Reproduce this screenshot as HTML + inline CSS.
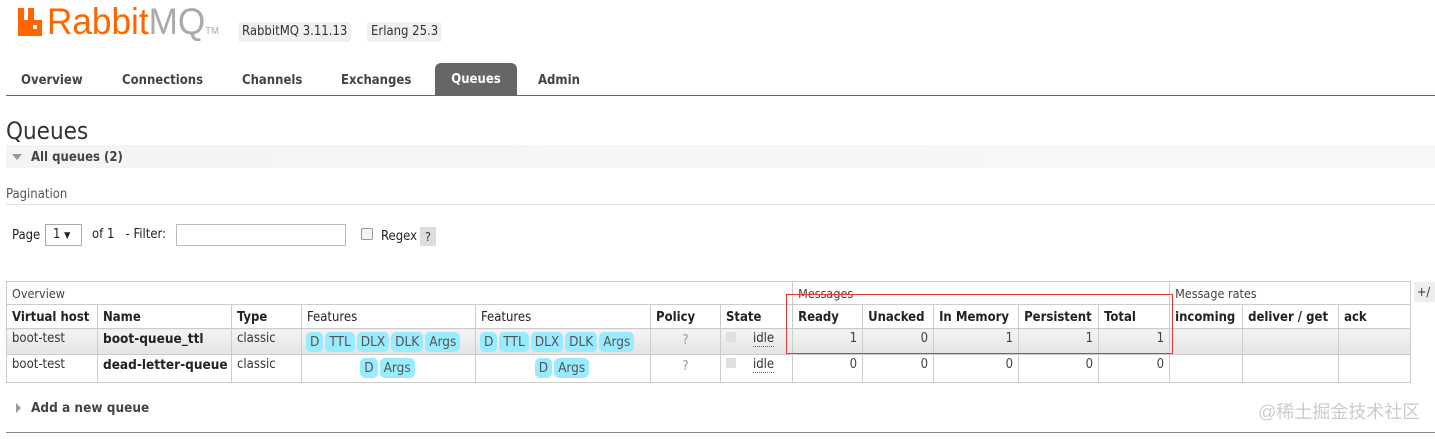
<!DOCTYPE html>
<html><head><meta charset="utf-8"><style>
*{margin:0;padding:0;box-sizing:border-box}
body{width:1435px;height:439px;background:#fff;position:relative;overflow:hidden;font-family:"DejaVu Sans Condensed","DejaVu Sans","Liberation Sans",sans-serif;color:#333;font-size:12.5px}
.a{position:absolute;white-space:nowrap}
.b{font-weight:bold}
.tab{position:absolute;top:63px;height:32px;line-height:33px;font-weight:bold;font-size:13px;color:#444}
table{position:absolute;left:6px;top:281px;border-collapse:collapse;table-layout:fixed;width:1404px}
td,th{border:1px solid #ccc;padding:0 5px;text-align:left;white-space:nowrap;font-size:13px;overflow:hidden}
th{font-weight:bold;font-size:13px;color:#222;height:24px;padding-top:1px}
tr.g td{height:23px;color:#444;font-size:12.5px}
tr.r1 td{height:26px;background:linear-gradient(#f4f4f4,#e4e4e4);vertical-align:top;padding-top:2px}
tr.r2 td{height:28px;vertical-align:top;padding-top:2px}
td.n{text-align:right;color:#444;padding-top:3px}
.f{display:inline-block;background:#99ebff;border-radius:5px;padding:0 4px;margin-right:2px;height:20px;line-height:20px;color:#555;font-size:13.5px}
.c{text-align:center}
</style></head><body>
<div class="a" style="left:18px;top:8px;width:30px;height:28px">
<svg width="30" height="28" viewBox="0 0 30 28"><path d="M0 0h6v12h4V0h6v12h8v16H0z" fill="#f60"/><rect x="15" y="17" width="4" height="4" fill="#fff"/></svg></div>
<div class="a" style="left:47px;top:0px;font-family:'Liberation Sans',sans-serif;font-size:37px;color:#f60;line-height:44px;transform:scaleX(0.95);transform-origin:left">Rabbit<span style="color:#aaa">MQ</span><span style="font-size:10px;color:#aaa">TM</span></div>
<div class="a" style="left:238px;top:22px;height:20px;line-height:20px;padding:0 4px;background:#f0f0f0;border-radius:3px;color:#333;font-size:13px">RabbitMQ 3.11.13</div>
<div class="a" style="left:367px;top:22px;height:20px;line-height:20px;padding:0 4px;background:#f0f0f0;border-radius:3px;color:#333;font-size:13px">Erlang 25.3</div>
<div class="tab" style="left:21px;top:64px">Overview</div>
<div class="tab" style="left:122px;top:64px">Connections</div>
<div class="tab" style="left:242px;top:64px">Channels</div>
<div class="tab" style="left:341px;top:64px">Exchanges</div>
<div class="tab" style="left:435px;width:82px;background:#666;color:#fff;text-align:center;border-radius:6px 6px 0 0;line-height:34px">Queues</div>
<div class="tab" style="left:538px;top:64px">Admin</div>
<div class="a" style="left:6px;top:95px;width:1429px;height:1px;background:#666"></div>
<div class="a" style="left:6px;top:116px;font-size:24px;color:#333;line-height:30px">Queues</div>
<div class="a" style="left:6px;top:145px;width:1429px;height:23px;background:linear-gradient(90deg,#f4f4f4,#f8f8f8)"></div>
<div class="a" style="left:12px;top:154px;width:0;height:0;border-left:5px solid transparent;border-right:5px solid transparent;border-top:6px solid #999"></div>
<div class="a b" style="left:31px;top:149px;font-size:13px;color:#444;line-height:18px">All queues (2)</div>
<div class="a" style="left:6px;top:187px;color:#555;line-height:16px;font-size:13px">Pagination</div>
<div class="a" style="left:6px;top:204px;width:1429px;height:1px;background:#e4e4e4"></div>
<div class="a" style="left:12px;top:228px;line-height:16px;color:#222;font-size:13px">Page</div>
<div class="a" style="left:45px;top:224px;width:37px;height:22px;border:1px solid #aaa;line-height:20px;padding-left:7px;color:#222;font-size:13px">1 <span style="font-size:9px">▼</span></div>
<div class="a" style="left:92px;top:227px;line-height:16px;color:#222;font-size:13px">of 1 &nbsp; - Filter:</div>
<div class="a" style="left:176px;top:224px;width:170px;height:22px;border:1px solid #bbb"></div>
<div class="a" style="left:361px;top:228px;width:12px;height:12px;border:1px solid #999;border-radius:2px;background:#f4f4f4"></div>
<div class="a" style="left:381px;top:229px;line-height:16px;color:#222;font-size:13px">Regex</div>
<div class="a" style="left:420px;top:227px;width:16px;height:19px;background:#ddd;text-align:center;line-height:19px;color:#333">?</div>
<table>
<colgroup><col style="width:91px"><col style="width:134px"><col style="width:70px"><col style="width:174px"><col style="width:175px"><col style="width:70px"><col style="width:72px"><col style="width:70px"><col style="width:71px"><col style="width:85px"><col style="width:80px"><col style="width:71px"><col style="width:73px"><col style="width:96px"><col style="width:72px"></colgroup>
<tr class="g"><td colspan="7">Overview</td><td colspan="5">Messages</td><td colspan="3">Message rates</td></tr>
<tr><th>Virtual host</th><th>Name</th><th>Type</th><th style="font-weight:normal">Features</th><th style="font-weight:normal">Features</th><th>Policy</th><th>State</th><th>Ready</th><th>Unacked</th><th>In Memory</th><th>Persistent</th><th>Total</th><th>incoming</th><th>deliver / get</th><th>ack</th></tr>
<tr class="r1"><td>boot-test</td><td class="b" style="font-size:13.5px;color:#222;padding-right:0">boot-queue_ttl</td><td>classic</td><td style="padding:3px 4px 0"><span class="f">D</span><span class="f">TTL</span><span class="f">DLX</span><span class="f">DLK</span><span class="f">Args</span></td><td style="padding:3px 4px 0"><span class="f">D</span><span class="f">TTL</span><span class="f">DLX</span><span class="f">DLK</span><span class="f">Args</span></td><td class="c" style="color:#999;padding-top:4px">?</td><td><span style="display:inline-block;width:10px;height:10px;background:#e0e0e0;margin:0 17px 0 0"></span><span style="border-bottom:1px dotted #666">idle</span></td><td class="n">1</td><td class="n">0</td><td class="n">1</td><td class="n">1</td><td class="n">1</td><td></td><td></td><td></td></tr>
<tr class="r2"><td>boot-test</td><td class="b" style="font-size:13.5px;color:#222;padding-right:0">dead-letter-queue</td><td>classic</td><td class="c" style="padding-top:3px"><span class="f">D</span><span class="f">Args</span></td><td class="c" style="padding-top:3px"><span class="f">D</span><span class="f">Args</span></td><td class="c" style="color:#999;padding-top:4px">?</td><td><span style="display:inline-block;width:10px;height:10px;background:#e0e0e0;margin:0 17px 0 0"></span><span style="border-bottom:1px dotted #666">idle</span></td><td class="n">0</td><td class="n">0</td><td class="n">0</td><td class="n">0</td><td class="n">0</td><td></td><td></td><td></td></tr>
</table>
<div class="a" style="left:1414px;top:282px;width:21px;height:20px;background:#eee;line-height:20px;padding-left:3px;color:#333">+/</div>
<div class="a" style="left:786px;top:294px;width:387px;height:60px;border:1px solid #e33"></div>
<div class="a" style="left:16px;top:403px;width:0;height:0;border-top:5px solid transparent;border-bottom:5px solid transparent;border-left:5px solid #999"></div>
<div class="a b" style="left:31px;top:400px;font-size:13.5px;color:#444;line-height:16px">Add a new queue</div>
<div class="a" style="left:1258px;top:401px;font-family:'Liberation Sans','Noto Sans CJK SC',sans-serif;font-size:18px;color:#ccc;line-height:22px">@稀土掘金技术社区</div>
<div class="a" style="left:6px;top:432px;width:1429px;height:1px;background:#888"></div>
</body></html>
